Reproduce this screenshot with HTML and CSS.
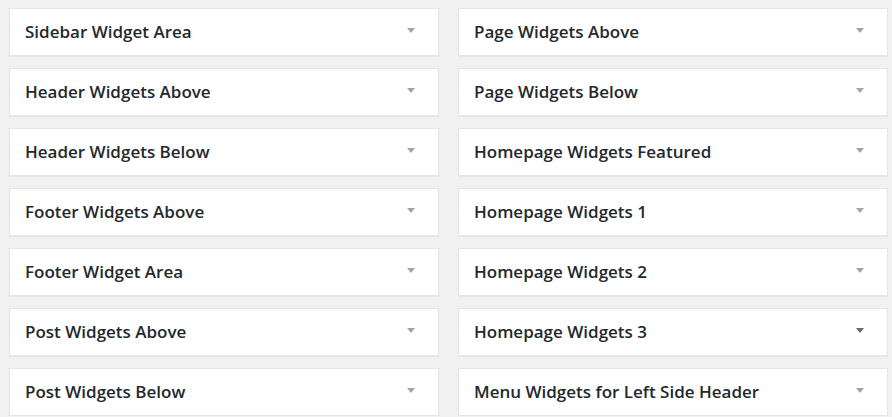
FILE: index.html
```html
<!DOCTYPE html>
<html>
<head>
<meta charset="utf-8">
<link rel="stylesheet" href="styles.css">
</head>
<body>
<div class="grid">
  <div class="col">
    <div class="box"><h2>Sidebar Widget Area</h2><span class="caret"></span></div>
    <div class="box"><h2>Header Widgets Above</h2><span class="caret"></span></div>
    <div class="box"><h2>Header Widgets Below</h2><span class="caret"></span></div>
    <div class="box"><h2>Footer Widgets Above</h2><span class="caret"></span></div>
    <div class="box"><h2>Footer Widget Area</h2><span class="caret"></span></div>
    <div class="box"><h2>Post Widgets Above</h2><span class="caret"></span></div>
    <div class="box"><h2>Post Widgets Below</h2><span class="caret"></span></div>
  </div>
  <div class="col">
    <div class="box"><h2>Page Widgets Above</h2><span class="caret"></span></div>
    <div class="box"><h2>Page Widgets Below</h2><span class="caret"></span></div>
    <div class="box"><h2>Homepage Widgets Featured</h2><span class="caret"></span></div>
    <div class="box"><h2>Homepage Widgets 1</h2><span class="caret"></span></div>
    <div class="box"><h2>Homepage Widgets 2</h2><span class="caret"></span></div>
    <div class="box"><h2>Homepage Widgets 3</h2><span class="caret caret-dark"></span></div>
    <div class="box"><h2>Menu Widgets for Left Side Header</h2><span class="caret"></span></div>
  </div>
</div>
</body>
</html>
```
FILE: styles.css
```css
html, body {
  margin: 0;
  padding: 0;
  background: #f1f1f1;
  font-family: "Open Sans", "Noto Sans", sans-serif;
  overflow: hidden;
}
.grid {
  display: grid;
  grid-template-columns: 430px 430px;
  column-gap: 19px;
  padding: 8px 0 0 9px;
}
.col {
  display: flex;
  flex-direction: column;
  gap: 12px;
}
.box {
  height: 48px;
  box-sizing: border-box;
  background: #fff;
  border: 1px solid #e5e5e5;
  box-shadow: 0 1px 1px rgba(0,0,0,0.04);
  display: flex;
  align-items: center;
  justify-content: space-between;
  padding: 0 23px 0 15px;
}
.box h2 {
  margin: -1px 0 0 0;
  font-size: 17px;
  font-weight: 600;
  color: #23282d;
  line-height: 22px;
}
.caret {
  width: 0;
  height: 0;
  border-left: 4px solid transparent;
  border-right: 4px solid transparent;
  border-top: 5px solid #a0a5aa;
  margin-top: -3px;
}
.caret-dark {
  border-top-color: #646970;
}
```
